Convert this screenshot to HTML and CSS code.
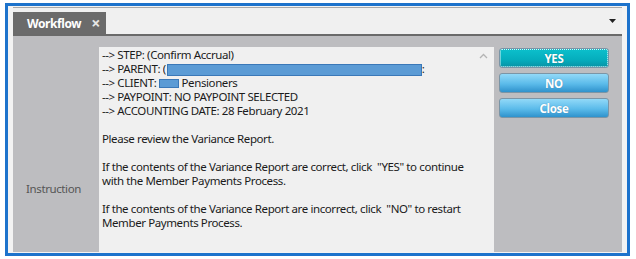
FILE: index.html
```html
<!DOCTYPE html>
<html lang="en">
<head>
    <meta charset="UTF-8">
    <title>Workflow</title>
    <link rel="stylesheet" href="styles.css">
</head>
<body>
    <div class="frame">
        <div class="tabbar">
            <div class="tab">
                <span class="tab-title">Workflow</span>
                <span class="tab-close">&times;</span>
            </div>
            <svg class="tab-menu" width="7" height="4" viewBox="0 0 7 4"><path d="M0 0 H7 L3.5 4 Z" fill="#222"/></svg>
        </div>

        <div class="content">
            <div class="label-col">Instruction</div>

            <div class="message">
                <svg class="scroll-up" width="9" height="6" viewBox="0 0 9 6"><path d="M1 5 L4.5 1.5 L8 5" fill="none" stroke="#b4b4b4" stroke-width="1.3"/></svg>
                <p>--&gt; STEP: (Confirm Accrual)</p>
                <p>--&gt; PARENT: <span class="cut">(</span><span class="redact redact-parent"></span><span class="cut">:</span></p>
                <p>--&gt; CLIENT: <span class="redact redact-client"></span> Pensioners</p>
                <p>--&gt; PAYPOINT: NO PAYPOINT SELECTED</p>
                <p>--&gt; ACCOUNTING DATE: 28 February 2021</p>
                <p>&nbsp;</p>
                <p>Please review the Variance Report.</p>
                <p>&nbsp;</p>
                <p>If the contents of the Variance Report are correct, click &nbsp;"YES" to continue</p>
                <p>with the Member Payments Process.</p>
                <p>&nbsp;</p>
                <p>If the contents of the Variance Report are incorrect, click &nbsp;"NO" to restart</p>
                <p>Member Payments Process.</p>
            </div>

            <div class="actions">
                <button type="button" class="btn btn-focus">YES</button>
                <button type="button" class="btn">NO</button>
                <button type="button" class="btn">Close</button>
            </div>
        </div>
    </div>
</body>
</html>
```

FILE: styles.css
```css
body {
    margin: 0;
    background-color: #fff;
    font-family: "Noto Sans", "Open Sans", sans-serif;
    color: #1b1b1b;
    letter-spacing: -0.4px;
}
.frame {
    margin: 3px 6px 5px 5px;
    height: 245px;
    border: 3px solid #1d73cc; /* blue highlight frame */
    background-color: #f3f3f3;
    padding: 1px 5px 1px 5px;
    display: flex;
    flex-direction: column;
}
.tabbar {
    height: 26px;
    border-top: 1px solid #a9a9a9;
    border-bottom: 2px solid #6a6a6a;
    background-color: #f0f0f0;
    display: flex;
    align-items: flex-end;
    justify-content: space-between;
}
.tab {
    width: 93px;
    height: 22px;
    background-color: #6b6b6b;
    color: #fff;
    display: flex;
    align-items: center;
    font-size: 12px;
    font-weight: bold;
}
.tab-title {
    margin-left: 14px;
}
.tab-close {
    margin-left: 10px;
    font-size: 16px;
    line-height: 16px;
    font-weight: bold;
    color: #e6e6e6;
}
.tab-menu {
    align-self: center;
    margin-right: 6px;
}
.content {
    flex: 1;
    background-color: #bdbdc0;
    display: flex;
}
.label-col {
    width: 86px;
    padding: 145px 5px 0 0;
    text-align: center;
    font-size: 11.5px;
    color: #555;
    box-sizing: border-box;
}
.message {
    position: relative;
    width: 395px;
    margin-top: 11px;
    padding: 1px 0 0 3px;
    background-color: #f0f0f0;
    box-sizing: border-box;
    font-size: 11.5px;
    line-height: 14px;
}
.message p {
    margin: 0;
    height: 14px;
    white-space: nowrap;
}
.scroll-up {
    position: absolute;
    top: 6px;
    right: 6px;
}
.cut {
    display: inline-block;
    width: 4px;
    overflow: hidden;
    vertical-align: top;
}
.redact {
    display: inline-block;
    vertical-align: top;
    background-color: #5b9bd5;
    border: 1px solid #3a78b8;
    box-sizing: border-box;
}
.redact-parent {
    width: 255px;
    height: 12px;
    margin-top: 2px;
}
.redact-client {
    width: 20px;
    height: 9px;
    margin-top: 3px;
}
.actions {
    margin: 12px 0 0 5px;
    width: 110px;
    display: flex;
    flex-direction: column;
    gap: 5px;
}
.btn {
    height: 20px;
    padding: 0;
    border: 1px solid #7b95a6;
    border-radius: 3px;
    background: linear-gradient(#92d9f8, #5bbbea 55%, #2f92cc);
    color: #fff;
    font-family: inherit;
    font-size: 11.5px;
    font-weight: bold;
    letter-spacing: -0.3px;
    text-shadow: 0 0 1px #3a7fa8;
}
.btn-focus {
    background: linear-gradient(#0cc0cc, #05adbd 60%, #0993a6);
    outline: 1px dotted #d8f4f6;
    outline-offset: -2px;
    text-shadow: 0 0 1px #06707c;
}
```
